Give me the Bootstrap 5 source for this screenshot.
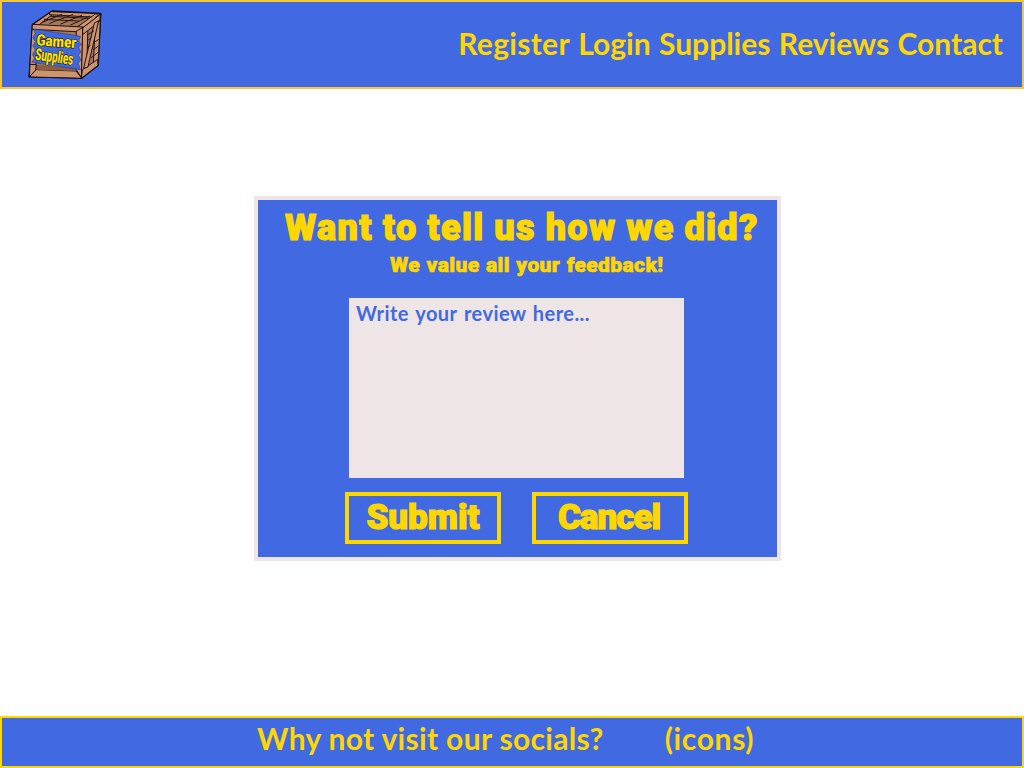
<!DOCTYPE html>
<html lang="en">
<head>
<meta charset="utf-8">
<meta name="viewport" content="width=device-width, initial-scale=1">
<title>Gamer Supplies - Reviews</title>
<link href="https://cdn.jsdelivr.net/npm/bootstrap@5.3.0/dist/css/bootstrap.min.css" rel="stylesheet">
<style>
  :root { --royal: #4169e1; --gold: #ffd700; --mist: #eee5e6; }
  body { font-family: Lato, "Open Sans", sans-serif; color: var(--gold); background: #fff; }
  .site-header { height: 89px; background: var(--royal); border: 2px solid #f6c835; padding: 0 19px 0 26px; }
  .site-header .nav-link { color: var(--gold); font-size: 30px; font-weight: 700; line-height: 36px; white-space: nowrap; }
  .site-header .nav-link:first-child { letter-spacing: .3px; }
  .site-header .navbar-nav { margin-top: -4px; gap: 8.4px; }
  .display-face { font-family: Roboto, Inter, sans-serif; font-weight: 900; white-space: nowrap; -webkit-text-stroke: 1.2px var(--gold); }
  .review-card { width: 527px; height: 365px; margin-left: 254px; background: var(--royal); border: 4px solid var(--mist); }
  .review-title { font-size: 36px; line-height: 40px; margin: 8px 0 0 27px; letter-spacing: 1.35px; word-spacing: -.5px; }
  .review-note { font-size: 21px; line-height: 24px; margin: 5px 0 0 132px; letter-spacing: .4px; word-spacing: .8px; -webkit-text-stroke-width: .6px; }
  .review-box { width: 335px; height: 180px; margin: 21px 0 0 91px; padding: 0 7px; background: var(--mist); color: var(--royal); resize: none; font-size: 20px; font-weight: 700; line-height: 30px; letter-spacing: .45px; word-spacing: 1.5px; }
  .review-box:focus { background: var(--mist); color: var(--royal); }
  .review-box::placeholder { color: var(--royal); opacity: 1; }
  .review-actions { gap: 31px; margin: 14px 0 0 87px; }
  .btn-review { width: 156px; height: 52px; border: 4px solid var(--gold); color: var(--gold); font-size: 35px; line-height: 42px; }
  .btn-cancel { letter-spacing: -1px; padding-right: 2px !important; }
  .btn-review:hover { background: var(--gold); color: var(--royal); }
  .site-footer { height: 52px; background: var(--royal); border: 2px solid var(--gold); padding-left: 255px; font-size: 30px; font-weight: 700; line-height: 40px; letter-spacing: .33px; gap: 61px; white-space: nowrap; }
  .social-icons { letter-spacing: .65px; }
</style>
</head>
<body class="d-flex flex-column vh-100 overflow-hidden">
<header class="site-header navbar navbar-expand flex-nowrap justify-content-between flex-shrink-0">
  <a class="navbar-brand p-0 m-0 d-flex" href="#" aria-label="Gamer Supplies">
    <svg width="74" height="70" viewBox="24 30 220 210" overflow="visible" stroke-linejoin="round" stroke-linecap="round">
      <path d="M37 73L96 33L241 41L233 196L184 234L27 230Z" fill="#a77858" stroke="#130d12" stroke-width="5"/>
      <g fill="#ce936f" stroke="#1c1113" stroke-width="3">
        <path d="M37 74L94 34L108 35L55 75Z"/>
        <path d="M91 35L240 41L226 52L88 44Z"/>
        <path d="M172 80L225 42L240 42L188 84Z"/>
        <path d="M37 73L188 81L184 96L36 88Z"/>
        <path d="M36 88L50 90L47 192L27 230Z"/>
        <path d="M27 230L48 209L167 213L184 234Z"/>
        <path d="M48 194L167 204L167 213L48 209Z" fill="#8c5f45" stroke="none"/>
        <path d="M27 230L29 193L48 194L46 209Z"/>
        <path d="M169 93L188 82L184 234L166 206Z"/>
        <path d="M188 82L203 73L199 218L184 234Z"/>
        <path d="M227 51L241 42L233 196L220 193Z"/>
        <path d="M188 83L240 43L238 64L188 103Z"/>
        <path d="M187 209L232 178L233 196L184 234Z"/>
        <path d="M190 204L222 69L235 62L203 200Z"/>
      </g>
      <path d="M64 68L124 43M88 70L157 44M121 72L184 46M151 75L207 49M72 58L174 63M92 49L203 55M201 105L220 93M201 122L213 113M201 143L209 137M224 125L234 119M219 149L233 139M213 173L232 158" fill="none" stroke="#25161a" stroke-width="3"/>
      <path d="M41 87L181 109L175 123L183 133L175 143L182 156L174 166L182 179L174 190L180 209L34 187L43 175L36 163L45 150L37 137L45 125L37 113L44 101Z" fill="#3f68df" stroke="#24346e" stroke-width="1.5"/>
      <g font-family="Roboto, sans-serif" font-weight="900" fill="#ffe100" stroke="#171921" stroke-width="4" paint-order="stroke">
        <text transform="translate(48 136) rotate(4)" font-size="47" textLength="119" lengthAdjust="spacingAndGlyphs">Gamer</text>
        <text transform="translate(43 179) rotate(8)" font-size="50" textLength="114" lengthAdjust="spacingAndGlyphs">Supplies</text>
      </g>
    </svg>
  </a>
  <nav class="navbar-nav">
    <a class="nav-link p-0" href="#">Register</a>
    <a class="nav-link p-0" href="#">Login</a>
    <a class="nav-link p-0" href="#">Supplies</a>
    <a class="nav-link p-0" href="#">Reviews</a>
    <a class="nav-link p-0" href="#">Contact</a>
  </nav>
</header>
<main class="flex-grow-1 d-flex align-items-start" style="padding-top:107px">
  <form class="review-card d-flex flex-column align-items-start flex-shrink-0">
    <h1 class="review-title display-face">Want to tell us how we did?</h1>
    <h2 class="review-note display-face">We value all your feedback!</h2>
    <textarea class="review-box form-control border-0 rounded-0 shadow-none" aria-label="Review" placeholder="Write your review here..."></textarea>
    <div class="review-actions d-flex">
      <button type="button" class="btn btn-review display-face rounded-0 p-0">Submit</button>
      <button type="button" class="btn btn-review btn-cancel display-face rounded-0 p-0">Cancel</button>
    </div>
  </form>
</main>
<footer class="site-footer d-flex flex-shrink-0">
  <span>Why not visit our socials?</span>
  <span class="social-icons">(icons)</span>
</footer>
<script src="https://cdn.jsdelivr.net/npm/bootstrap@5.3.0/dist/js/bootstrap.bundle.min.js"></script>
</body>
</html>
